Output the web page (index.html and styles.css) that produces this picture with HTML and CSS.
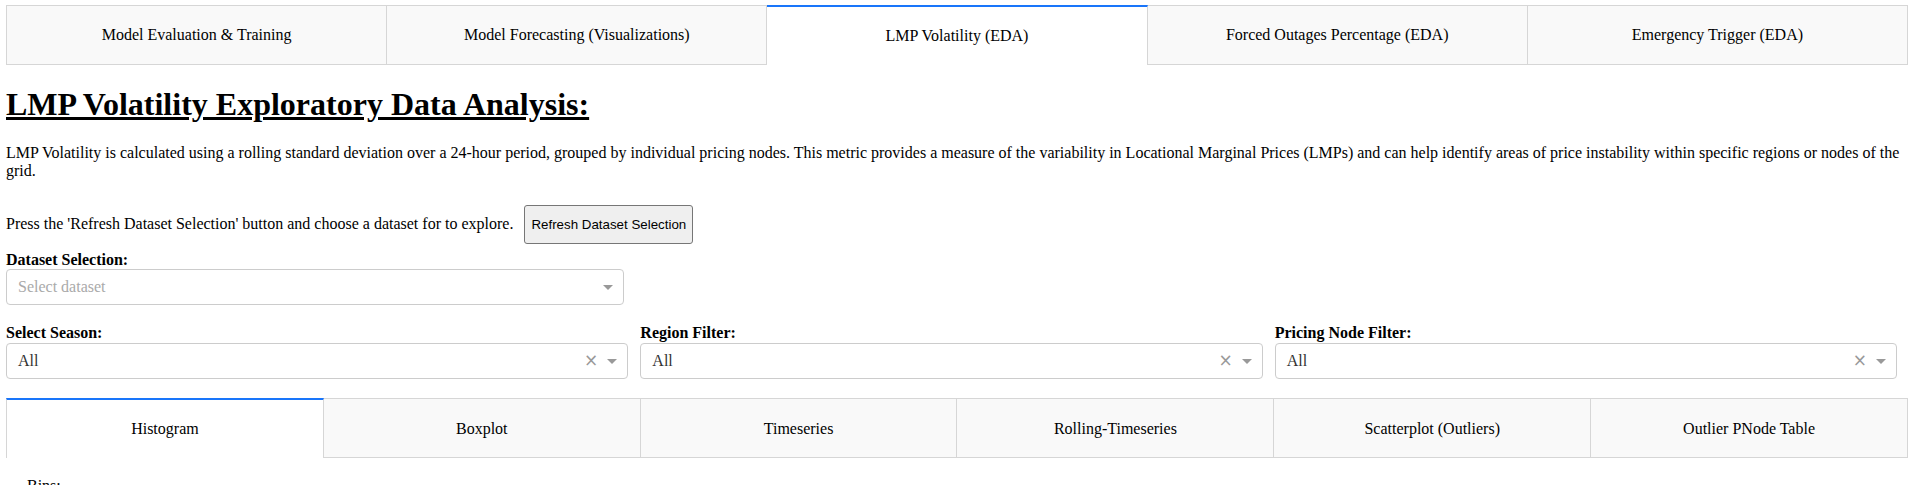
FILE: index.html
```html
<!DOCTYPE html>
<html>
<head>
<meta charset="utf-8">
<title>LMP Volatility EDA</title>
<link rel="stylesheet" href="styles.css">
</head>
<body>
<div class="page">
  <div class="tabs top-tabs">
    <div class="tab">Model Evaluation &amp; Training</div>
    <div class="tab">Model Forecasting (Visualizations)</div>
    <div class="tab tab-selected">LMP Volatility (EDA)</div>
    <div class="tab">Forced Outages Percentage (EDA)</div>
    <div class="tab">Emergency Trigger (EDA)</div>
  </div>

  <h1 class="title">LMP Volatility Exploratory Data Analysis:</h1>

  <p class="desc">LMP Volatility is calculated using a rolling standard deviation over a 24-hour period, grouped by individual pricing nodes. This metric provides a measure of the variability in Locational Marginal Prices (LMPs) and can help identify areas of price instability within specific regions or nodes of the grid.</p>

  <div class="refresh-row">
    <span>Press the 'Refresh Dataset Selection' button and choose a dataset for to explore.</span>
    <button class="refresh-btn">Refresh Dataset Selection</button>
  </div>

  <label class="field-label">Dataset Selection:</label>
  <div class="dropdown dataset-dd">
    <span class="placeholder">Select dataset</span>
    <span class="controls"><span class="arrow"></span></span>
  </div>

  <div class="filters">
    <div class="filter">
      <label class="field-label">Select Season:</label>
      <div class="dropdown">
        <span class="value">All</span>
        <span class="controls"><span class="clear">×</span><span class="arrow"></span></span>
      </div>
    </div>
    <div class="filter">
      <label class="field-label">Region Filter:</label>
      <div class="dropdown">
        <span class="value">All</span>
        <span class="controls"><span class="clear">×</span><span class="arrow"></span></span>
      </div>
    </div>
    <div class="filter">
      <label class="field-label">Pricing Node Filter:</label>
      <div class="dropdown">
        <span class="value">All</span>
        <span class="controls"><span class="clear">×</span><span class="arrow"></span></span>
      </div>
    </div>
  </div>

  <div class="tabs sub-tabs">
    <div class="tab tab-selected">Histogram</div>
    <div class="tab">Boxplot</div>
    <div class="tab">Timeseries</div>
    <div class="tab">Rolling-Timeseries</div>
    <div class="tab">Scatterplot (Outliers)</div>
    <div class="tab">Outlier PNode Table</div>
  </div>

  <div class="tab-content">
    <div class="bins-label">Bins:</div>
  </div>
</div>
</body>
</html>
```

FILE: styles.css
```css
html, body {
  margin: 0;
  padding: 0;
  background: #ffffff;
}

body {
  font-family: "Liberation Serif", "Times New Roman", serif;
  font-size: 16px;
  color: #000;
}

.page {
  padding: 5px 6px 0 6px;
}

.tabs {
  display: flex;
  height: 60px;
}

.tab {
  flex: 1 1 0;
  box-sizing: border-box;
  display: flex;
  align-items: center;
  justify-content: center;
  background: #f9f9f9;
  border: 1px solid #d6d6d6;
  border-left: none;
  color: #000;
  font-size: 16px;
}

.tab:first-child {
  border-left: 1px solid #d6d6d6;
}

.tab-selected {
  background: #ffffff;
  border-top: 2px solid #1975fa;
  border-bottom: none;
  padding-top: 0;
}

.sub-tabs .tab {
  padding-top: 2px;
}

.sub-tabs .tab-selected {
  padding-top: 0;
}

.title {
  font-size: 32px;
  font-weight: bold;
  text-decoration: underline;
  margin: 21px 0 21px 0;
}

.desc {
  margin: 0;
  line-height: 18.4px;
}

.refresh-row {
  display: flex;
  align-items: center;
  margin-top: 24px;
  margin-bottom: 7px;
}

.refresh-btn {
  margin-left: 11px;
  height: 39px;
  padding: 0 6px;
  font-family: "Liberation Sans", Arial, sans-serif;
  font-size: 13.33px;
  color: #000;
  background: #efefef;
  border: 1px solid #767676;
  border-radius: 3px;
}

.field-label {
  display: block;
  font-weight: bold;
  line-height: 18.4px;
}

.dropdown {
  box-sizing: border-box;
  height: 36px;
  border: 1px solid #cccccc;
  border-radius: 4px;
  background: #fff;
  display: flex;
  align-items: center;
  padding-left: 11px;
  padding-right: 10px;
}

.dataset-dd {
  width: 618px;
}

.placeholder {
  color: #aaaaaa;
  flex: 1;
}

.value {
  color: #333333;
  flex: 1;
}

.controls {
  display: flex;
  align-items: center;
}

.clear {
  color: #999999;
  font-family: "DejaVu Sans", sans-serif;
  font-size: 17px;
  line-height: 1;
  margin-right: 9px;
}

.arrow {
  display: inline-block;
  width: 0;
  height: 0;
  border-style: solid;
  border-width: 5px 5px 2.5px;
  border-color: #999999 transparent transparent;
  margin-top: 3px;
}

.filters {
  display: grid;
  grid-template-columns: 1fr 1fr 1fr;
  column-gap: 12px;
  margin-top: 19px;
  margin-right: 11px;
  margin-bottom: 19px;
}

.tab-content {
  padding: 19px 21px 0 21px;
}

.bins-label {
  line-height: 18.4px;
}
```
